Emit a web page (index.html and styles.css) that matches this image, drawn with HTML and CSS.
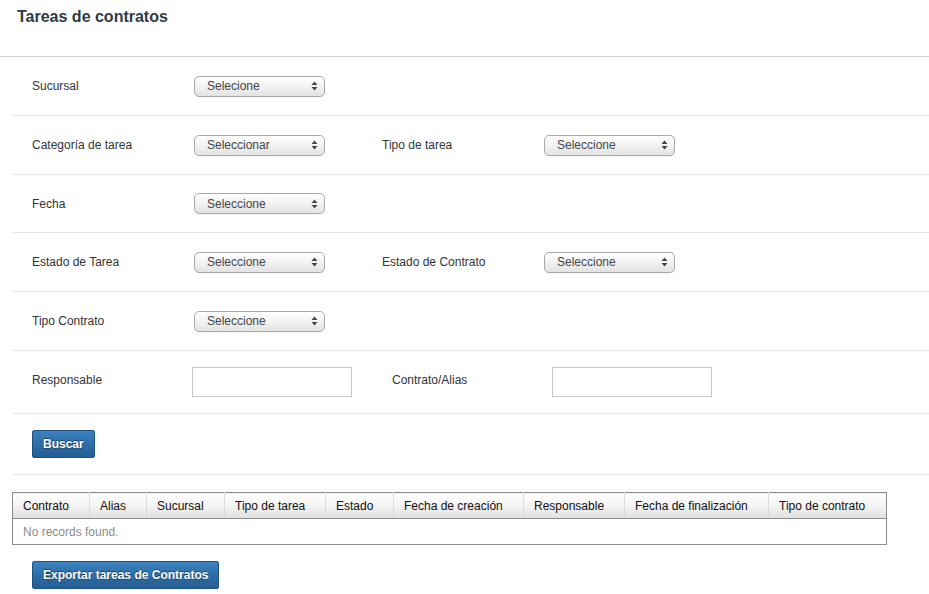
FILE: index.html
```html
<!DOCTYPE html>
<html lang="es">
<head>
<meta charset="utf-8">
<title>Tareas de contratos</title>
<link rel="stylesheet" href="styles.css">
</head>
<body>
<div class="header"><h1 class="title">Tareas de contratos</h1></div>
<div class="content">
  <div class="row">
    <div class="label">Sucursal</div>
    <div class="field"><div class="select"><span>Selecione</span><svg class="arr" width="7" height="10" viewBox="0 0 7 10"><path d="M3.5 0.5 L6.5 4 L0.5 4 Z M3.5 9.5 L6.5 6 L0.5 6 Z" fill="#444"/></svg></div></div>
  </div>
  <div class="row">
    <div class="label">Categoría de tarea</div>
    <div class="field"><div class="select"><span>Seleccionar</span><svg class="arr" width="7" height="10" viewBox="0 0 7 10"><path d="M3.5 0.5 L6.5 4 L0.5 4 Z M3.5 9.5 L6.5 6 L0.5 6 Z" fill="#444"/></svg></div></div>
    <div class="label">Tipo de tarea</div>
    <div class="field"><div class="select"><span>Seleccione</span><svg class="arr" width="7" height="10" viewBox="0 0 7 10"><path d="M3.5 0.5 L6.5 4 L0.5 4 Z M3.5 9.5 L6.5 6 L0.5 6 Z" fill="#444"/></svg></div></div>
  </div>
  <div class="row short">
    <div class="label">Fecha</div>
    <div class="field"><div class="select"><span>Seleccione</span><svg class="arr" width="7" height="10" viewBox="0 0 7 10"><path d="M3.5 0.5 L6.5 4 L0.5 4 Z M3.5 9.5 L6.5 6 L0.5 6 Z" fill="#444"/></svg></div></div>
  </div>
  <div class="row">
    <div class="label">Estado de Tarea</div>
    <div class="field"><div class="select"><span>Seleccione</span><svg class="arr" width="7" height="10" viewBox="0 0 7 10"><path d="M3.5 0.5 L6.5 4 L0.5 4 Z M3.5 9.5 L6.5 6 L0.5 6 Z" fill="#444"/></svg></div></div>
    <div class="label">Estado de Contrato</div>
    <div class="field"><div class="select"><span>Seleccione</span><svg class="arr" width="7" height="10" viewBox="0 0 7 10"><path d="M3.5 0.5 L6.5 4 L0.5 4 Z M3.5 9.5 L6.5 6 L0.5 6 Z" fill="#444"/></svg></div></div>
  </div>
  <div class="row">
    <div class="label">Tipo Contrato</div>
    <div class="field"><div class="select"><span>Seleccione</span><svg class="arr" width="7" height="10" viewBox="0 0 7 10"><path d="M3.5 0.5 L6.5 4 L0.5 4 Z M3.5 9.5 L6.5 6 L0.5 6 Z" fill="#444"/></svg></div></div>
  </div>
  <div class="row inputs">
    <div class="label">Responsable</div>
    <div class="field"><input class="text" type="text"></div>
    <div class="label">Contrato/Alias</div>
    <div class="field"><input class="text" type="text"></div>
  </div>
  <div class="row actions">
    <button class="btn">Buscar</button>
  </div>
  <table class="grid">
    <colgroup>
      <col style="width:77px"><col style="width:57px"><col style="width:78px"><col style="width:101px"><col style="width:68px"><col style="width:130px"><col style="width:101px"><col style="width:144px"><col style="width:118px">
    </colgroup>
    <thead>
      <tr><th>Contrato</th><th>Alias</th><th>Sucursal</th><th>Tipo de tarea</th><th>Estado</th><th>Fecha de creación</th><th>Responsable</th><th>Fecha de finalización</th><th>Tipo de contrato</th></tr>
    </thead>
    <tbody>
      <tr><td colspan="9" class="empty">No records found.</td></tr>
    </tbody>
  </table>
  <div class="export"><button class="btn">Exportar tareas de Contratos</button></div>
</div>
</body>
</html>
```

FILE: styles.css
```css
html, body {
  margin: 0;
  padding: 0;
  background: #fff;
}
body {
  font-family: "Liberation Sans", Arial, sans-serif;
  font-size: 12px;
  color: #333;
}
.header {
  height: 57px;
  border-bottom: 1px solid #d4d4d4;
  box-sizing: border-box;
  padding: 8px 0 0 17px;
}
.title {
  margin: 0;
  font-size: 16px;
  font-weight: bold;
  color: #2f3a45;
  line-height: 18px;
}
.content {
  margin-left: 12px;
}
.row {
  height: 58px;
  border-bottom: 1px solid #e6e6e6;
  display: flex;
  align-items: center;
  padding-left: 20px;
}
.row.short {
  height: 57px;
}
.row.inputs {
  height: 62px;
}
.row.actions {
  height: 61px;
  align-items: flex-start;
  padding-top: 16px;
  box-sizing: border-box;
}
.label {
  width: 162px;
  color: #333;
  line-height: 14px;
}
.field {
  width: 188px;
}
.inputs .label {
  width: 160px;
  margin-bottom: 4px;
}
.inputs .field {
  width: 200px;
}
.select {
  width: 131px;
  height: 21px;
  box-sizing: border-box;
  border: 1px solid #a9a9a9;
  border-radius: 5px;
  background: linear-gradient(#ffffff, #f2f2f2 50%, #e2e2e2);
  display: flex;
  align-items: center;
  justify-content: space-between;
  padding: 0 6px 0 12px;
  color: #444;
  box-shadow: 0 1px 0 rgba(0,0,0,0.04);
}
.arr {
  display: block;
}
.text {
  display: block;
  width: 160px;
  height: 30px;
  box-sizing: border-box;
  border: 1px solid #c8c8c8;
  margin: 0;
  padding: 0 6px;
  font: inherit;
  background: #fff;
}
.btn {
  font-family: "Liberation Sans", Arial, sans-serif;
  font-size: 12px;
  font-weight: bold;
  color: #fff;
  text-shadow: 0 -1px 0 rgba(0,0,0,0.45), 0 1px 1px rgba(0,0,0,0.3);
  background: linear-gradient(#3b82c0, #2d6ca4 55%, #245e92);
  border: 1px solid #1f5383;
  border-radius: 2px;
  height: 28px;
  padding: 0 10px;
  margin: 0;
  cursor: pointer;
}
.grid {
  margin-top: 17px;
  width: 875px;
  border-collapse: collapse;
  table-layout: fixed;
  border: 1px solid #8c8c8c;
}
.grid th {
  height: 25px;
  padding: 0 0 0 10px;
  text-align: left;
  font-weight: normal;
  color: #111;
  background: linear-gradient(#ffffff, #f3f3f3 50%, #e0e0e0);
  border-left: 1px solid #dcdcdc;
  border-bottom: 1px solid #8c8c8c;
  white-space: nowrap;
  overflow: hidden;
}
.grid th:first-child {
  border-left: none;
}
.grid td.empty {
  height: 25px;
  padding: 0 0 0 10px;
  color: #8a8a8a;
}
.export {
  padding: 16px 0 0 20px;
}
```
